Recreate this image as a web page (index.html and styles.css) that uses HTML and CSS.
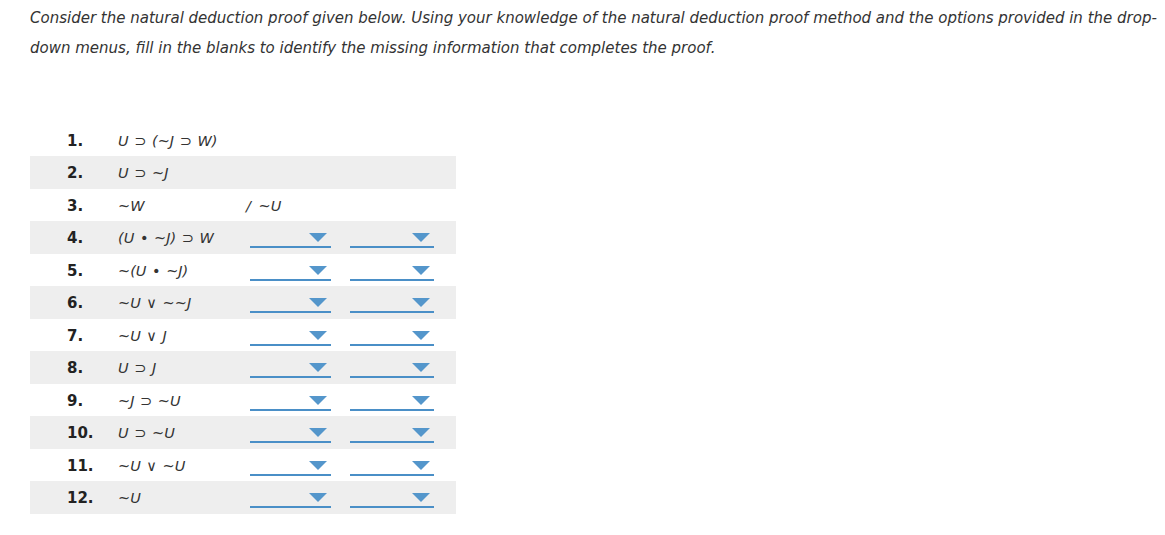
FILE: index.html
```html
<!DOCTYPE html>
<html>
<head>
<meta charset="utf-8">
<link rel="stylesheet" href="styles.css">
</head>
<body>
<div class="page">
  <p class="intro">Consider the natural deduction proof given below. Using your knowledge of the natural deduction proof method and the options provided in the drop-down menus, fill in the blanks to identify the missing information that completes the proof.</p>
  <div class="proof">
    <div class="row"><span class="num">1.</span><span class="formula">U ⊃ (~J ⊃ W)</span></div>
    <div class="row alt"><span class="num">2.</span><span class="formula">U ⊃ ~J</span></div>
    <div class="row"><span class="num">3.</span><span class="formula">~W</span><span class="concl">/ ~U</span></div>
    <div class="row alt"><span class="num">4.</span><span class="formula">(U • ~J) ⊃ W</span><span class="dd first"></span><span class="dd second"></span></div>
    <div class="row"><span class="num">5.</span><span class="formula">~(U • ~J)</span><span class="dd first"></span><span class="dd second"></span></div>
    <div class="row alt"><span class="num">6.</span><span class="formula">~U ∨ ~~J</span><span class="dd first"></span><span class="dd second"></span></div>
    <div class="row"><span class="num">7.</span><span class="formula">~U ∨ J</span><span class="dd first"></span><span class="dd second"></span></div>
    <div class="row alt"><span class="num">8.</span><span class="formula">U ⊃ J</span><span class="dd first"></span><span class="dd second"></span></div>
    <div class="row"><span class="num">9.</span><span class="formula">~J ⊃ ~U</span><span class="dd first"></span><span class="dd second"></span></div>
    <div class="row alt"><span class="num">10.</span><span class="formula">U ⊃ ~U</span><span class="dd first"></span><span class="dd second"></span></div>
    <div class="row"><span class="num">11.</span><span class="formula">~U ∨ ~U</span><span class="dd first"></span><span class="dd second"></span></div>
    <div class="row alt"><span class="num">12.</span><span class="formula">~U</span><span class="dd first"></span><span class="dd second"></span></div>
  </div>
</div>
</body>
</html>
```
FILE: styles.css
```css
html, body {
  margin: 0;
  padding: 0;
  background: #ffffff;
}
.page {
  padding: 3px 0 0 30px;
  font-family: "DejaVu Sans", Verdana, sans-serif;
  color: #333333;
}
.intro {
  margin: 0;
  font-size: 15px;
  font-style: italic;
  line-height: 30px;
  width: 1134px;
}
.proof {
  margin-top: 60.5px;
  width: 426px;
}
.row {
  height: 32.5px;
  display: flex;
  align-items: center;
  position: relative;
}
.row.alt {
  background: #eeeeee;
}
.num {
  width: 51px;
  padding-left: 37px;
  padding-top: 2px;
  font-weight: bold;
  font-size: 15px;
  color: #222222;
}
.formula {
  width: 128px;
  padding-top: 2px;
  font-style: italic;
  font-size: 14.5px;
  word-spacing: 1px;
}
.concl {
  padding-top: 2px;
  font-style: italic;
  font-size: 14.5px;
  word-spacing: 3px;
}
.dd {
  position: relative;
  align-self: flex-start;
  height: 25px;
  border-bottom: 2px solid #4a8fc7;
}
.dd.first {
  width: 81px;
  margin-left: 4px;
}
.dd.second {
  width: 84px;
  margin-left: 19px;
}
.dd::after {
  content: "";
  position: absolute;
  right: 4px;
  top: 12px;
  border-left: 9px solid transparent;
  border-right: 9px solid transparent;
  border-top: 9px solid #5496cb;
}
```
